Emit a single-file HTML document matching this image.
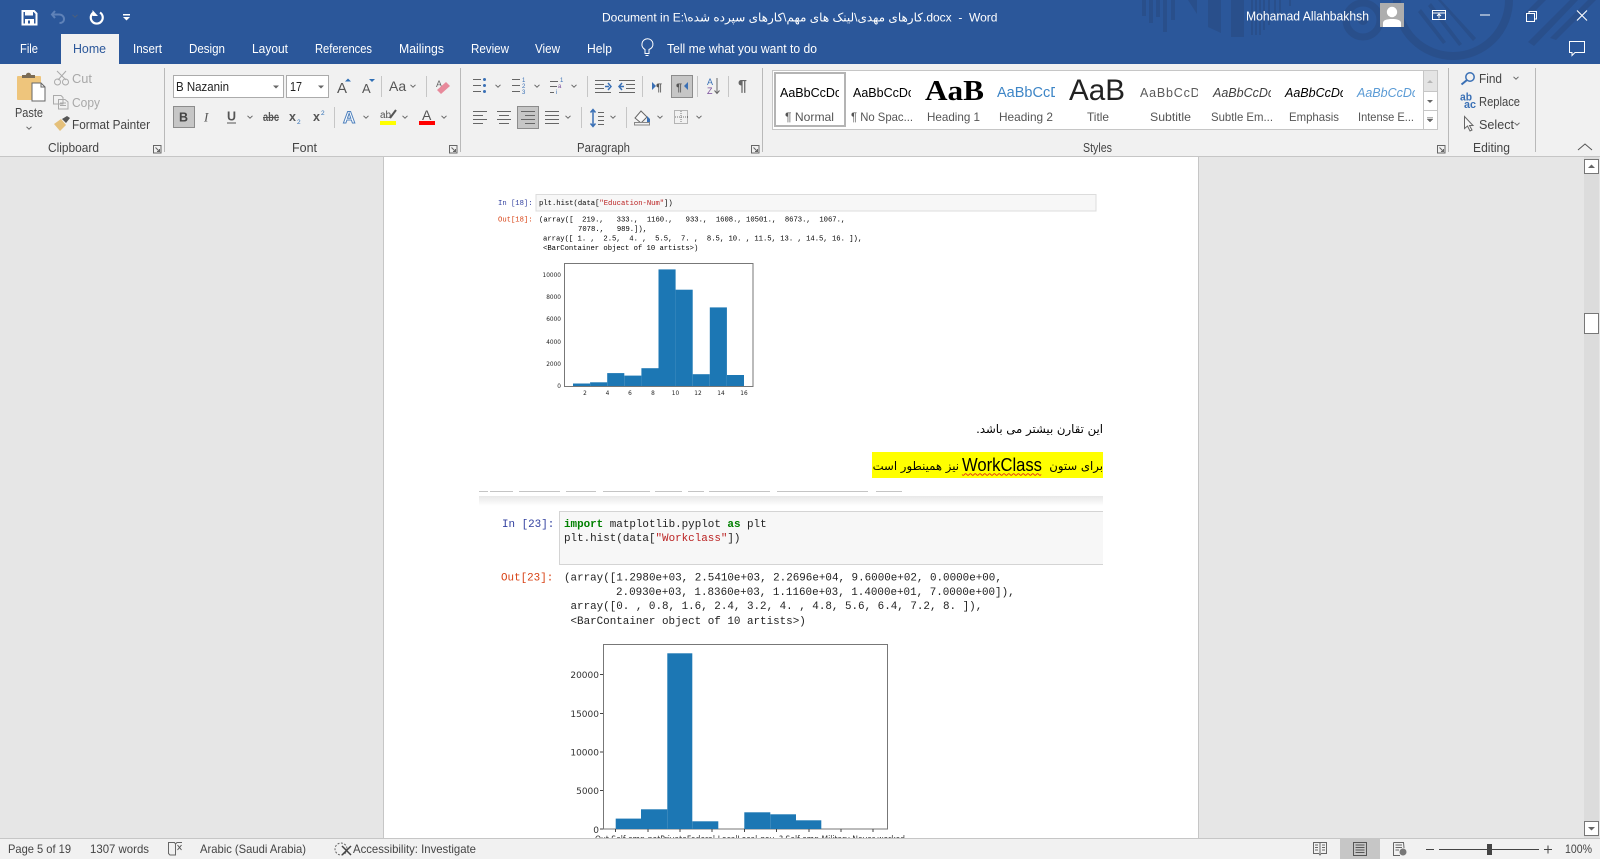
<!DOCTYPE html>
<html lang="en">
<head>
<meta charset="utf-8">
<title>Word</title>
<style>
html,body{margin:0;padding:0;width:1600px;height:859px;overflow:hidden;background:#e6e6e6}
svg{display:block;position:absolute;left:0;top:0}
text{font-family:"Liberation Sans",sans-serif;font-size:12px;fill:#444;white-space:pre}
.tab{fill:#fff;font-size:12.5px}
.l{fill:#444;font-size:12.5px}
.g{fill:#a8a8a8;font-size:12.5px}
.s{fill:#555;font-size:12px}
.m{font-family:"Liberation Mono",monospace}
.a{font-family:"DejaVu Sans",sans-serif;fill:#000}
</style>
</head>
<body>
<svg width="1600" height="859" viewBox="0 0 1600 859" xmlns="http://www.w3.org/2000/svg">
<defs>
<path id="v" d="M-2.5-1.2L0 1.2L2.5-1.2" fill="none" stroke="#666" stroke-width="1"/>
<path id="dl" d="M0 0H7.5V7.5H0ZM2 2L6 6M6 3.5V6H3.5" fill="none" stroke="#666" stroke-width="1"/>
<path id="lines4" d="M0 .5H14M0 4.5H14M0 8.5H14M0 12.5H14" fill="none" stroke="#666" stroke-width="1"/>
<filter id="b1" x="-5%" y="-5%" width="110%" height="110%"><feGaussianBlur stdDeviation="0.3"/></filter>
<filter id="b2" x="-5%" y="-5%" width="110%" height="110%"><feGaussianBlur stdDeviation="0.3"/></filter>
<linearGradient id="band" x1="0" y1="0" x2="0" y2="1"><stop offset="0" stop-color="#e8e8e8"/><stop offset="1" stop-color="#fff"/></linearGradient>
<clipPath id="docclip"><rect x="384" y="157" width="814" height="681"/></clipPath>
<clipPath id="n1"><rect x="778" y="80" width="61" height="24"/></clipPath>
<clipPath id="n2"><rect x="851" y="80" width="60" height="24"/></clipPath>
<clipPath id="n3"><rect x="995" y="80" width="60" height="24"/></clipPath>
<clipPath id="n4"><rect x="1065" y="76" width="62" height="28"/></clipPath>
<clipPath id="n5"><rect x="1138" y="80" width="60" height="24"/></clipPath>
<clipPath id="n6"><rect x="1211" y="80" width="60" height="24"/></clipPath>
<clipPath id="n7"><rect x="1283" y="80" width="60" height="24"/></clipPath>
<clipPath id="n8"><rect x="1355" y="80" width="60" height="24"/></clipPath>
<clipPath id="tbclip"><rect x="0" y="0" width="1600" height="64"/></clipPath>
</defs>

<!-- title bar -->
<rect width="1600" height="64" fill="#2b579a"/>
<g clip-path="url(#tbclip)" fill="#294f8b">
<rect x="1142" y="0" width="4" height="16"/><rect x="1149" y="0" width="4" height="23"/><rect x="1156" y="0" width="4" height="17"/><rect x="1163" y="0" width="4" height="32"/><rect x="1171" y="0" width="4" height="20"/>
<path d="M1188 0H1197V14Z"/><path d="M1208 0H1221V33L1208 27Z"/><rect x="1231" y="0" width="13" height="37"/>
<rect x="1251" y="0" width="2" height="35"/><rect x="1255" y="0" width="2" height="35"/><rect x="1259" y="0" width="2" height="35"/><rect x="1263" y="0" width="2" height="30"/><rect x="1268" y="0" width="2" height="25"/><rect x="1274" y="0" width="2" height="20"/><rect x="1279" y="0" width="2" height="16"/><rect x="1289" y="0" width="2" height="6"/>
<circle cx="1363" cy="20" r="17" fill="none" stroke="#294f8b" stroke-width="7"/><circle cx="1363" cy="20" r="5"/>
<circle cx="1453" cy="0" r="56" fill="none" stroke="#294f8b" stroke-width="8"/>
<path d="M1418 12L1421 9L1446 42L1443 44ZM1428 6L1431 3L1462 44L1459 46ZM1438 0L1441 0L1476 38L1473 41Z"/>
<path d="M1524 14L1538 0H1546L1528 18Z"/><path d="M1528 42L1570 0H1578L1534 46Z"/><path d="M1550 38L1588 0H1596L1556 40Z"/>
</g>

<!-- QAT -->
<path d="M22.5 11H34L36.500 13.500V24.500H22.500Z" fill="none" stroke="#fff" stroke-width="2"/><rect x="25" y="11" width="8" height="4.500" fill="#fff"/><rect x="25" y="19" width="9" height="5" fill="#fff"/><rect x="28" y="20.500" width="2" height="3" fill="#2b579a"/>
<path d="M55 11L52 14.500L55 18M52.500 14.500H59C62 14.500 64 16.500 64 19S62 23 59.500 23" fill="none" stroke="#5f82b8" stroke-width="2"/>
<use href="#v" x="75" y="16" style="opacity:.6"/>
<path d="M100 12.500A6 6 0 1 1 93.500 12.500" fill="none" stroke="#fff" stroke-width="2.200"/><path d="M92.500 10V16H98Z" fill="#fff"/>
<rect x="123" y="14" width="7" height="1.500" fill="#fff"/><path d="M123 17H130L126.500 20.500Z" fill="#fff"/>

<!-- title text -->
<text x="602" y="21.500" style="fill:#fff;font-size:12px;font-family:'Liberation Sans','DejaVu Sans',sans-serif">Document in E:\کارهای مهدی\لینک های مهم\کارهای سپرده شده.docx  -  Word</text>
<text x="1246" y="20.500" textLength="123" lengthAdjust="spacingAndGlyphs" style="fill:#fff;font-size:12.500px">Mohamad Allahbakhsh</text>

<rect x="1380" y="3" width="24" height="24" fill="#adadad"/>
<circle cx="1392" cy="12" r="5.200" fill="#fff"/><path d="M1383 27V23C1383 20 1387 19 1392 19S1401 20 1401 23V27Z" fill="#fff"/>

<path d="M1432.500 10.500H1445.500V19.500H1432.500ZM1432.500 13H1445.500" fill="none" stroke="#fff"/><path d="M1439 18.500V14.500M1437 16L1439 14L1441 16" fill="none" stroke="#fff"/>
<rect x="1480" y="14.500" width="10" height="1" fill="#fff"/>
<path d="M1526.500 13.500H1534.500V21.500H1526.500ZM1529 13V11.500H1536.500V19H1535" fill="none" stroke="#fff"/>
<path d="M1577 10.500L1587 20.500M1587 10.500L1577 20.500" stroke="#fff" stroke-width="1.100"/>
<path d="M1569.500 41.500H1584.500V52.500H1575L1572 55.500V52.500H1569.500Z" fill="none" stroke="#fff"/>

<!-- tabs -->
<rect x="61" y="34" width="58" height="30" fill="#f1f1f1"/>
<text class="tab" x="20" y="53" textLength="18" lengthAdjust="spacingAndGlyphs">File</text>
<text class="tab" x="73" y="53" textLength="33" lengthAdjust="spacingAndGlyphs" style="fill:#2b579a">Home</text>
<text class="tab" x="133" y="53" textLength="29" lengthAdjust="spacingAndGlyphs">Insert</text>
<text class="tab" x="189" y="53" textLength="36" lengthAdjust="spacingAndGlyphs">Design</text>
<text class="tab" x="252" y="53" textLength="36" lengthAdjust="spacingAndGlyphs">Layout</text>
<text class="tab" x="315" y="53" textLength="57" lengthAdjust="spacingAndGlyphs">References</text>
<text class="tab" x="399" y="53" textLength="45" lengthAdjust="spacingAndGlyphs">Mailings</text>
<text class="tab" x="471" y="53" textLength="38" lengthAdjust="spacingAndGlyphs">Review</text>
<text class="tab" x="535" y="53" textLength="25" lengthAdjust="spacingAndGlyphs">View</text>
<text class="tab" x="587" y="53" textLength="25" lengthAdjust="spacingAndGlyphs">Help</text>
<path d="M642 43.500A5.500 5.500 0 1 1 649 49.500V53.500H645V49.500A5.500 5.500 0 0 1 642 43.500Z" fill="none" stroke="#fff"/><path d="M645.500 55.500H648.500" stroke="#fff"/>
<text class="tab" x="667" y="53" textLength="150" lengthAdjust="spacingAndGlyphs">Tell me what you want to do</text>

<!-- ribbon -->
<rect y="64" width="1600" height="92" fill="#f1f1f1"/>
<rect y="156" width="1600" height="1" fill="#c6c6c6"/>
<g fill="#b9b9b9">
<rect x="164" y="68" width="1" height="84"/><rect x="460" y="68" width="1" height="84"/><rect x="762" y="68" width="1" height="84"/><rect x="1448" y="68" width="1" height="84"/><rect x="1535" y="68" width="1" height="84"/>
</g>
<!-- paste -->
<rect x="17" y="76" width="24" height="24" rx="1" fill="#eec57c"/>
<path d="M22 76V75H26C26 72 31 72 31 75H35V78H22Z" fill="#7b6c55"/>
<path d="M32 83H41L45 87V101H32Z" fill="#fff" stroke="#666"/><path d="M41 83V87H45" fill="none" stroke="#666"/>
<text class="l" x="15" y="117" textLength="28" lengthAdjust="spacingAndGlyphs">Paste</text><use href="#v" x="29" y="128"/>
<!-- cut copy painter -->
<path d="M57 71L66 80M66 71L58 80" stroke="#aaa" fill="none"/><circle cx="57.500" cy="82" r="3" fill="none" stroke="#aaa"/><circle cx="65.500" cy="82" r="3" fill="none" stroke="#aaa"/>
<text class="g" x="72" y="83" textLength="20" lengthAdjust="spacingAndGlyphs">Cut</text>
<path d="M53.500 95.500H61L63 97.500V104H53.500ZM58.500 99.500H65L68 102V109H58.500Z" fill="#f1f1f1" stroke="#aaa"/><path d="M60 103H66M60 105.500H66" stroke="#aaa"/>
<text class="g" x="72" y="107" textLength="28" lengthAdjust="spacingAndGlyphs">Copy</text>
<path d="M54 124L61 119L66 125L60 131Z" fill="#e5c07a"/><path d="M62 119L66 123L70 118L67 116Z" fill="#555"/>
<text class="l" x="72" y="129" textLength="78" lengthAdjust="spacingAndGlyphs">Format Painter</text>
<text class="l" x="48" y="152" textLength="51" lengthAdjust="spacingAndGlyphs">Clipboard</text>
<use href="#dl" x="153.500" y="145.500"/>

<!-- font -->
<rect x="173.500" y="75.500" width="110" height="22" fill="#fff" stroke="#ababab"/>
<rect x="286.500" y="75.500" width="42" height="22" fill="#fff" stroke="#ababab"/>
<text x="176" y="91" textLength="53" lengthAdjust="spacingAndGlyphs" style="fill:#222;font-size:12.500px">B Nazanin</text>
<text x="290" y="91" textLength="12" lengthAdjust="spacingAndGlyphs" style="fill:#222;font-size:12.500px">17</text>
<path d="M273 85.500H279L276 88.500Z M318 85.500H324L321 88.500Z" fill="#666"/>
<text x="337" y="93" style="fill:#555;font-size:15px">A</text><path d="M345 81.500H351L348 78.500Z" fill="#2f6fb5"/>
<text x="362" y="93" style="fill:#555;font-size:13px">A</text><path d="M369 79H375L372 82Z" fill="#2f6fb5"/>
<rect x="381" y="76" width="1" height="21" fill="#c6c6c6"/>
<text x="389" y="91" style="fill:#555;font-size:14px">Aa</text><use href="#v" x="413" y="86"/>
<rect x="426" y="76" width="1" height="21" fill="#c6c6c6"/>
<text x="436" y="87" style="fill:#666;font-size:9px">A</text><path d="M437 90L446 82L450 86L441 94Z" fill="#e88a9b"/>

<rect x="173.500" y="106.500" width="21" height="21" fill="#c6c6c6" stroke="#8c8c8c"/>
<text x="179" y="121.500" style="fill:#444;font-size:12.500px;font-weight:bold">B</text>
<text x="204" y="121.500" style="fill:#555;font-size:13px;font-style:italic;font-family:'Liberation Serif',serif">I</text>
<text x="227" y="120.500" style="fill:#555;font-size:12.500px;font-weight:bold">U</text><rect x="227" y="122.500" width="9" height="1" fill="#555"/><use href="#v" x="250" y="117"/>
<text x="263" y="121" textLength="16" lengthAdjust="spacingAndGlyphs" style="fill:#555;font-size:12px;font-weight:bold">abc</text><rect x="263" y="117" width="16" height="1" fill="#555"/>
<text x="289" y="121" style="fill:#555;font-size:12.500px;font-weight:bold">x</text><text x="297" y="124" style="fill:#2f6fb5;font-size:6.500px">2</text>
<text x="313" y="121" style="fill:#555;font-size:12.500px;font-weight:bold">x</text><text x="321" y="115" style="fill:#2f6fb5;font-size:6.500px">2</text>
<rect x="334" y="107" width="1" height="21" fill="#c6c6c6"/>
<text x="343" y="123" style="fill:#fff;stroke:#4f81bd;stroke-width:1;font-size:17px;font-weight:bold">A</text><use href="#v" x="366" y="117"/>
<text x="380" y="118" style="fill:#555;font-size:10px">ab</text><path d="M390 118L396 110" stroke="#555" stroke-width="2"/><rect x="380" y="121" width="16" height="4" fill="#ff0"/><use href="#v" x="405" y="117"/>
<text x="422" y="120" style="fill:#555;font-size:14px">A</text><rect x="419" y="121" width="16" height="4" fill="#f00"/><use href="#v" x="444" y="117"/>
<text x="292" y="152" style="fill:#444;font-size:12.500px">Font</text>
<use href="#dl" x="449.500" y="145.500"/>

<!-- paragraph row 1 -->
<g stroke="#666" fill="none"><path d="M473 79.500H481M473 85.500H481M473 91.500H481"/></g><g fill="#3a70b5"><circle cx="484.500" cy="79.500" r="1.500"/><circle cx="484.500" cy="85.500" r="1.500"/><circle cx="484.500" cy="91.500" r="1.500"/></g><use href="#v" x="498" y="86"/>
<g stroke="#666" fill="none"><path d="M512 79.500H520M512 85.500H520M512 91.500H520"/></g><text x="522" y="82" style="fill:#3a70b5;font-size:6px">1</text><text x="522" y="88" style="fill:#3a70b5;font-size:6px">2</text><text x="522" y="94" style="fill:#3a70b5;font-size:6px">3</text><use href="#v" x="537" y="86"/>
<g stroke="#666" fill="none"><path d="M550 81.500H558M550 86.500H557M550 92.500H554"/></g><text x="560" y="82" style="fill:#3a70b5;font-size:6px">1</text><text x="558" y="88" style="fill:#7a4f9c;font-size:6px">a</text><text x="556" y="94" style="fill:#3a70b5;font-size:6px">i</text><use href="#v" x="574" y="86"/>
<rect x="587" y="76" width="1" height="21" fill="#c6c6c6"/>
<path d="M595 80.500H611M595 84.500H604M595 88.500H604M595 92.500H611" stroke="#666" fill="none"/><path d="M605 86.500H609M608 83L611 86.500L608 90" stroke="#3a70b5" stroke-width="1.500" fill="none"/>
<path d="M619 80.500H635M626 84.500H635M626 88.500H635M619 92.500H635" stroke="#666" fill="none"/><path d="M624 86.500H620M622 83L619 86.500L622 90" stroke="#3a70b5" stroke-width="1.500" fill="none"/>
<rect x="642" y="76" width="1" height="21" fill="#c6c6c6"/>
<path d="M652 82V90L656 86Z" fill="#3a70b5"/><text x="656" y="91" style="fill:#555;font-size:11px;font-weight:bold">¶</text>
<rect x="671.500" y="75.500" width="21" height="22" fill="#c6c6c6" stroke="#8c8c8c"/>
<text x="676" y="91" style="fill:#555;font-size:11px;font-weight:bold">¶</text><path d="M688 82V90L684 86Z" fill="#3a70b5"/>
<rect x="697" y="76" width="1" height="21" fill="#c6c6c6"/>
<text x="707" y="85" style="fill:#3a70b5;font-size:9px">A</text><text x="707" y="94" style="fill:#7a4f9c;font-size:9px">Z</text><path d="M717 78V93M714.500 90.500L717 93.500L719.500 90.500" stroke="#666" fill="none"/>
<rect x="728" y="76" width="1" height="21" fill="#c6c6c6"/>
<text x="738" y="91" style="fill:#666;font-size:16px;font-weight:bold">¶</text>
<!-- row 2 -->
<path d="M473 111.500H487M473 115.500H483M473 119.500H487M473 123.500H483" stroke="#666" fill="none"/>
<path d="M497 111.500H511M499 115.500H509M497 119.500H511M499 123.500H509" stroke="#666" fill="none"/>
<rect x="517.500" y="106.500" width="21" height="22" fill="#c6c6c6" stroke="#8c8c8c"/>
<path d="M521 111.500H535M525 115.500H535M521 119.500H535M525 123.500H535" stroke="#666" fill="none"/>
<use href="#lines4" x="545" y="111"/><use href="#v" x="568" y="117"/>
<rect x="581" y="107" width="1" height="21" fill="#c6c6c6"/>
<path d="M593 110V126M590.500 112.500L593 109.500L595.500 112.500M590.500 123.500L593 126.500L595.500 123.500" stroke="#3a70b5" stroke-width="1.500" fill="none"/><path d="M598 112.500H604M598 116.500H604M598 120.500H604M598 124.500H604" stroke="#666" fill="none"/><use href="#v" x="613" y="117"/>
<rect x="626" y="107" width="1" height="21" fill="#c6c6c6"/>
<path d="M635 118L641 111L647 117L641 123Z" fill="#f7f7f7" stroke="#666"/><path d="M647 116L650 119V122H647Z" fill="#3a70b5"/><rect x="634.500" y="122.500" width="15" height="2.500" fill="#f1f1f1" stroke="#888"/><use href="#v" x="660" y="117"/>
<rect x="674.500" y="110.500" width="13" height="13" fill="none" stroke="#777" stroke-dasharray="1 1"/><path d="M681 111V124M675 117H688" stroke="#777" stroke-dasharray="1 1"/><use href="#v" x="699" y="117"/>
<text x="577" y="152" textLength="53" lengthAdjust="spacingAndGlyphs" style="fill:#444;font-size:12.500px">Paragraph</text>
<use href="#dl" x="751.500" y="145.500"/>

<!-- styles -->
<rect x="772.500" y="70.500" width="665" height="59" fill="#fff" stroke="#c6c6c6"/>
<rect x="775" y="73" width="70" height="53" fill="#fff" stroke="#b4b4b4" stroke-width="2"/>
<rect x="1423" y="71" width="14" height="20" fill="#e4e4e4"/>
<path d="M1423.500 70.500V129.500M1423.500 91.500H1437.500M1423.500 110.500H1437.500" stroke="#c6c6c6" fill="none"/>
<path d="M1427 83H1433L1430 80Z" fill="#b5b5b5"/><path d="M1427 100H1433L1430 103Z" fill="#666"/><path d="M1427 117.500H1433M1427 119H1433L1430 122Z" fill="#666" stroke="#666" stroke-width=".5"/>
<text clip-path="url(#n1)" x="780" y="97" style="fill:#000;font-size:12.500px">AaBbCcDc</text>
<text clip-path="url(#n2)" x="853" y="97" style="fill:#000;font-size:12.500px">AaBbCcDc</text>
<text x="925" y="100" style="fill:#000;font-family:'Liberation Serif',serif;font-size:28.500px;font-weight:bold" textLength="59" lengthAdjust="spacingAndGlyphs">AaB</text>
<text clip-path="url(#n3)" x="997" y="97" style="fill:#3d85c6;font-size:14.500px">AaBbCcD</text>
<text clip-path="url(#n4)" x="1069" y="100" textLength="56" lengthAdjust="spacingAndGlyphs" style="fill:#222;font-size:30px">AaB</text>
<text clip-path="url(#n5)" x="1140" y="97" style="fill:#5a5a5a;font-size:12.500px;letter-spacing:.8px">AaBbCcD</text>
<text clip-path="url(#n6)" x="1213" y="97" style="fill:#404040;font-size:12.500px;font-style:italic">AaBbCcDc</text>
<text clip-path="url(#n7)" x="1285" y="97" style="fill:#000;font-size:12.500px;font-style:italic">AaBbCcDc</text>
<text clip-path="url(#n8)" x="1357" y="97" style="fill:#5b9bd5;font-size:12.500px;font-style:italic">AaBbCcDc</text>
<text class="s" x="785" y="121" textLength="49" lengthAdjust="spacingAndGlyphs">¶ Normal</text>
<text class="s" x="851" y="121" textLength="62" lengthAdjust="spacingAndGlyphs">¶ No Spac...</text>
<text class="s" x="927" y="121" textLength="53" lengthAdjust="spacingAndGlyphs">Heading 1</text>
<text class="s" x="999" y="121" textLength="54" lengthAdjust="spacingAndGlyphs">Heading 2</text>
<text class="s" x="1087" y="121" textLength="22" lengthAdjust="spacingAndGlyphs">Title</text>
<text class="s" x="1150" y="121" textLength="41" lengthAdjust="spacingAndGlyphs">Subtitle</text>
<text class="s" x="1211" y="121" textLength="62" lengthAdjust="spacingAndGlyphs">Subtle Em...</text>
<text class="s" x="1289" y="121" textLength="50" lengthAdjust="spacingAndGlyphs">Emphasis</text>
<text class="s" x="1358" y="121" textLength="56" lengthAdjust="spacingAndGlyphs">Intense E...</text>
<text x="1083" y="152" textLength="29" lengthAdjust="spacingAndGlyphs" style="fill:#444;font-size:12.500px">Styles</text>
<use href="#dl" x="1437.500" y="145.500"/>

<!-- editing -->
<circle cx="1470" cy="77" r="4.200" fill="none" stroke="#3a70b5" stroke-width="1.500"/><path d="M1467 80L1461.500 84.500" stroke="#3a70b5" stroke-width="2"/>
<text class="l" x="1479" y="83" textLength="23" lengthAdjust="spacingAndGlyphs">Find</text><use href="#v" x="1516" y="78"/>
<text x="1460" y="100.500" textLength="12" lengthAdjust="spacingAndGlyphs" style="fill:#3a70b5;font-size:11px;font-weight:bold">ab</text><text x="1464" y="108" textLength="12" lengthAdjust="spacingAndGlyphs" style="fill:#3a70b5;font-size:11px;font-weight:bold">ac</text>
<text class="l" x="1479" y="106" textLength="41" lengthAdjust="spacingAndGlyphs">Replace</text>
<path d="M1464.500 116.500V128.500L1467.500 126L1470 131L1472 130L1469.500 125.500H1473Z" fill="#f7f7f7" stroke="#666"/>
<text class="l" x="1479" y="129" textLength="35" lengthAdjust="spacingAndGlyphs">Select</text><use href="#v" x="1517" y="124"/>
<text x="1473" y="152" textLength="37" lengthAdjust="spacingAndGlyphs" style="fill:#444;font-size:12.500px">Editing</text>
<path d="M1578 150L1585 144L1592 150" fill="none" stroke="#555"/>

<!-- doc area -->
<rect y="157" width="1600" height="681" fill="#e6e6e6"/>
<rect x="383" y="157" width="815" height="681" fill="#fff"/>
<rect x="383" y="157" width="1" height="681" fill="#c6c6c6"/>
<rect x="1198" y="157" width="1" height="681" fill="#c6c6c6"/>
<!-- scrollbar -->
<rect x="1584" y="157" width="15" height="681" fill="#dcdcdc"/>
<rect x="1584.500" y="159.500" width="14" height="14" fill="#fff" stroke="#777"/><path d="M1588 168H1595L1591.500 164.500Z" fill="#666"/>
<rect x="1584.500" y="313.500" width="14" height="20" fill="#fff" stroke="#777"/>
<rect x="1584.500" y="821.500" width="14" height="14" fill="#fff" stroke="#777"/><path d="M1588 827H1595L1591.500 830.500Z" fill="#666"/>

<g clip-path="url(#docclip)">
<!-- notebook 1 -->
<g filter="url(#b1)">
<rect x="536" y="194.500" width="560" height="16.500" fill="#f7f7f7" stroke="#dcdcdc"/>
<text class="m" x="498" y="205" style="fill:#303f9f;font-size:7.200px">In [18]:</text>
<text class="m" x="539" y="205" style="fill:#000;font-size:7.200px">plt.hist(data[<tspan style="fill:#ba2121">"Education-Num"</tspan>])</text>
<text class="m" x="498" y="221.500" style="fill:#d84315;font-size:7.200px">Out[18]:</text>
<text class="m" x="539" y="221.500" style="fill:#000;font-size:7.200px">(array([  219.,   333.,  1160.,   933.,  1608., 10501.,  8673.,  1067.,</text>
<text class="m" x="578" y="231" style="fill:#000;font-size:7.200px">7078.,   989.]),</text>
<text class="m" x="543" y="240.500" style="fill:#000;font-size:7.200px">array([ 1. ,  2.5,  4. ,  5.5,  7. ,  8.5, 10. , 11.5, 13. , 14.5, 16. ]),</text>
<text class="m" x="543" y="250" style="fill:#000;font-size:7.200px">&lt;BarContainer object of 10 artists&gt;)</text>
<rect x="564.500" y="263.500" width="188.500" height="123" fill="#fff" stroke="#777"/>
<g fill="#1f77b4">
<rect x="573" y="383.500" width="17.100" height="2.500"/><rect x="590.100" y="382.300" width="17.100" height="3.700"/><rect x="607.200" y="373.100" width="17.100" height="12.900"/><rect x="624.300" y="375.600" width="17.100" height="10.400"/><rect x="641.400" y="368.200" width="17.100" height="17.800"/><rect x="658.500" y="269.400" width="17.100" height="116.600"/><rect x="675.600" y="289.700" width="17.100" height="96.300"/><rect x="692.700" y="374.200" width="17.100" height="11.800"/><rect x="709.800" y="307.400" width="17.100" height="78.600"/><rect x="726.900" y="375" width="17.100" height="11"/>
</g>
<text x="561" y="277" text-anchor="end" style="fill:#222;font-size:5.800px;font-family:'DejaVu Sans',sans-serif">10000</text>
<text x="561" y="299" text-anchor="end" style="fill:#222;font-size:5.800px;font-family:'DejaVu Sans',sans-serif">8000</text>
<text x="561" y="321" text-anchor="end" style="fill:#222;font-size:5.800px;font-family:'DejaVu Sans',sans-serif">6000</text>
<text x="561" y="344" text-anchor="end" style="fill:#222;font-size:5.800px;font-family:'DejaVu Sans',sans-serif">4000</text>
<text x="561" y="366" text-anchor="end" style="fill:#222;font-size:5.800px;font-family:'DejaVu Sans',sans-serif">2000</text>
<text x="561" y="388" text-anchor="end" style="fill:#222;font-size:5.800px;font-family:'DejaVu Sans',sans-serif">0</text>
<text x="585" y="395" text-anchor="middle" style="fill:#222;font-size:5.800px;font-family:'DejaVu Sans',sans-serif">2</text>
<text x="607.500" y="395" text-anchor="middle" style="fill:#222;font-size:5.800px;font-family:'DejaVu Sans',sans-serif">4</text>
<text x="630" y="395" text-anchor="middle" style="fill:#222;font-size:5.800px;font-family:'DejaVu Sans',sans-serif">6</text>
<text x="653" y="395" text-anchor="middle" style="fill:#222;font-size:5.800px;font-family:'DejaVu Sans',sans-serif">8</text>
<text x="675.500" y="395" text-anchor="middle" style="fill:#222;font-size:5.800px;font-family:'DejaVu Sans',sans-serif">10</text>
<text x="698" y="395" text-anchor="middle" style="fill:#222;font-size:5.800px;font-family:'DejaVu Sans',sans-serif">12</text>
<text x="721" y="395" text-anchor="middle" style="fill:#222;font-size:5.800px;font-family:'DejaVu Sans',sans-serif">14</text>
<text x="744" y="395" text-anchor="middle" style="fill:#222;font-size:5.800px;font-family:'DejaVu Sans',sans-serif">16</text>
</g>

<!-- arabic paragraphs -->
<text class="a" x="1103" y="433" direction="rtl" style="fill:#000;font-size:11.700px">این تقارن بیشتر می باشد.</text>
<rect x="872" y="452" width="231" height="26" fill="#ff0"/>
<text class="a" x="1103" y="470" direction="rtl" style="fill:#000;font-size:11.700px">برای ستون</text>
<text x="962" y="471" textLength="80" lengthAdjust="spacingAndGlyphs" style="fill:#000;font-size:18px">WorkClass</text>
<path d="M962 474.500q1.200 1.600 2.400 0t2.400 0 2.400 0 2.400 0 2.400 0 2.400 0 2.400 0 2.400 0 2.400 0 2.400 0 2.400 0 2.400 0 2.400 0 2.400 0 2.400 0 2.400 0 2.400 0 2.400 0 2.400 0 2.400 0 2.400 0 2.400 0 2.400 0 2.400 0 2.400 0 2.400 0 2.400 0 2.400 0 2.400 0 2.400 0 2.400 0 2.400 0 2.400 0" fill="none" stroke="#e02020" stroke-width=".8"/>
<text class="a" x="959" y="470" direction="rtl" style="fill:#000;font-size:11.700px">نیز همینطور است</text>

<!-- notebook 2 -->
<path d="M479 491.500H488M490 491.500H513M519 491.500H560M566 491.500H596M603 491.500H650M655 491.500H682M688 491.500H704M709 491.500H770M777 491.500H868M876 491.500H902" stroke="#c4c4c4" fill="none" stroke-width="1"/>
<rect x="479" y="496" width="624" height="10" fill="url(#band)"/>
<g filter="url(#b2)">
<rect x="559.500" y="511.500" width="560" height="53" fill="#f7f7f7" stroke="#d4d4d4"/>
<rect x="1103" y="505" width="40" height="65" fill="#fff"/>
<text class="m" x="502" y="527" style="fill:#303f9f;font-size:10.900px">In [23]:</text>
<text class="m" x="564" y="527" style="fill:#222;font-size:10.900px"><tspan style="fill:#008000;font-weight:bold">import</tspan> matplotlib.pyplot <tspan style="fill:#008000;font-weight:bold">as</tspan> plt</text>
<text class="m" x="564" y="541" style="fill:#222;font-size:10.900px">plt.hist(data[<tspan style="fill:#ba2121">"Workclass"</tspan>])</text>
<text class="m" x="501" y="580.500" style="fill:#d84315;font-size:10.900px">Out[23]:</text>
<text class="m" x="564" y="580.500" style="fill:#222;font-size:10.900px">(array([1.2980e+03, 2.5410e+03, 2.2696e+04, 9.6000e+02, 0.0000e+00,</text>
<text class="m" x="616" y="595" style="fill:#222;font-size:10.900px">2.0930e+03, 1.8360e+03, 1.1160e+03, 1.4000e+01, 7.0000e+00]),</text>
<text class="m" x="570.500" y="609" style="fill:#222;font-size:10.900px">array([0. , 0.8, 1.6, 2.4, 3.2, 4. , 4.8, 5.6, 6.4, 7.2, 8. ]),</text>
<text class="m" x="570.500" y="624" style="fill:#222;font-size:10.900px">&lt;BarContainer object of 10 artists&gt;)</text>
</g>

<!-- chart 2 -->
<g filter="url(#b2)">
<rect x="603.500" y="644.500" width="284" height="184.500" fill="#fff" stroke="#777"/>
<g fill="#1f77b4">
<rect x="615.700" y="818.600" width="25.400" height="10.400"/><rect x="641" y="809.300" width="26.300" height="19.700"/><rect x="667.300" y="653.300" width="25" height="175.700"/><rect x="692.300" y="821.300" width="26" height="7.700"/><rect x="744.300" y="812.300" width="26" height="16.700"/><rect x="770.300" y="814.300" width="25.700" height="14.700"/><rect x="796" y="820.300" width="25.300" height="8.700"/>
</g>
<path d="M615.500 829V832M648 829V832M680 829V832M712 829V832M744.500 829V832M776.500 829V832M809 829V832M841 829V832M873 829V832M600 674.500H603M600 713.500H603M600 752H603M600 790.500H603M600 829H603" stroke="#444"/>
<text x="599" y="678" text-anchor="end" style="fill:#333;font-size:9px;font-family:'DejaVu Sans',sans-serif">20000</text>
<text x="599" y="717" text-anchor="end" style="fill:#333;font-size:9px;font-family:'DejaVu Sans',sans-serif">15000</text>
<text x="599" y="755.500" text-anchor="end" style="fill:#333;font-size:9px;font-family:'DejaVu Sans',sans-serif">10000</text>
<text x="599" y="794" text-anchor="end" style="fill:#333;font-size:9px;font-family:'DejaVu Sans',sans-serif">5000</text>
<text x="599" y="833" text-anchor="end" style="fill:#333;font-size:9px;font-family:'DejaVu Sans',sans-serif">0</text>
<text x="595" y="842" textLength="310" lengthAdjust="spacingAndGlyphs" style="fill:#333;font-size:9px;font-family:'DejaVu Sans',sans-serif">Out Self-emp-notPrivateFederal-LocalLocal-gov  ? Self-emp Military Never-worked</text>
</g>
</g>

<!-- status bar -->
<rect y="838" width="1600" height="21" fill="#f1f1f1"/>
<rect y="838" width="1600" height="1" fill="#c6c6c6"/>
<text x="8" y="853" textLength="63" lengthAdjust="spacingAndGlyphs" style="fill:#444;font-size:12px">Page 5 of 19</text>
<text x="90" y="853" textLength="59" lengthAdjust="spacingAndGlyphs" style="fill:#444;font-size:12px">1307 words</text>
<path d="M168.500 842.500H174.500L175.500 844V855H170L168.500 853.500ZM175.500 844L177 842.500H182" fill="none" stroke="#666"/><path d="M177.500 845L181.500 850M181.500 845L177.500 850" stroke="#555"/>
<text x="200" y="853" textLength="106" lengthAdjust="spacingAndGlyphs" style="fill:#444;font-size:12px">Arabic (Saudi Arabia)</text>
<circle cx="341" cy="849" r="6" fill="none" stroke="#666" stroke-dasharray="2 1.500"/><path d="M342 846L351 855M351 846L342 855" stroke="#444" stroke-width="1.500"/>
<text x="353" y="853" textLength="123" lengthAdjust="spacingAndGlyphs" style="fill:#444;font-size:12px">Accessibility: Investigate</text>
<rect x="1340" y="839" width="40" height="20" fill="#c6c6c6"/>
<path d="M1313.500 842.500H1326.500V853.500H1321L1320 855L1319 853.500H1313.500ZM1320 843V853M1315 845H1318M1315 847.500H1318M1315 850H1318M1322 845H1325M1322 847.500H1325M1322 850H1325" fill="none" stroke="#666"/>
<path d="M1353.500 842.500H1366.500V855.500H1353.500ZM1355.500 845H1364.500M1355.500 847.500H1364.500M1355.500 850H1364.500M1355.500 852.500H1364.500" fill="none" stroke="#555"/>
<path d="M1393.500 842.500H1403.500L1404 848M1393.500 842.500V855.500H1400M1395.500 845H1402M1395.500 847.500H1402M1395.500 850H1399" fill="none" stroke="#666"/><circle cx="1403" cy="852" r="3.500" fill="#777"/>
<rect x="1426" y="849" width="8" height="1" fill="#444"/>
<rect x="1439" y="849" width="100" height="1" fill="#444"/>
<rect x="1487" y="844" width="5" height="11" fill="#444"/>
<path d="M1544 849.500H1552M1548 845.500V853.500" stroke="#444" fill="none"/>
<text x="1565" y="853" textLength="27" lengthAdjust="spacingAndGlyphs" style="fill:#444;font-size:12px">100%</text>
</svg>
</body>
</html>
